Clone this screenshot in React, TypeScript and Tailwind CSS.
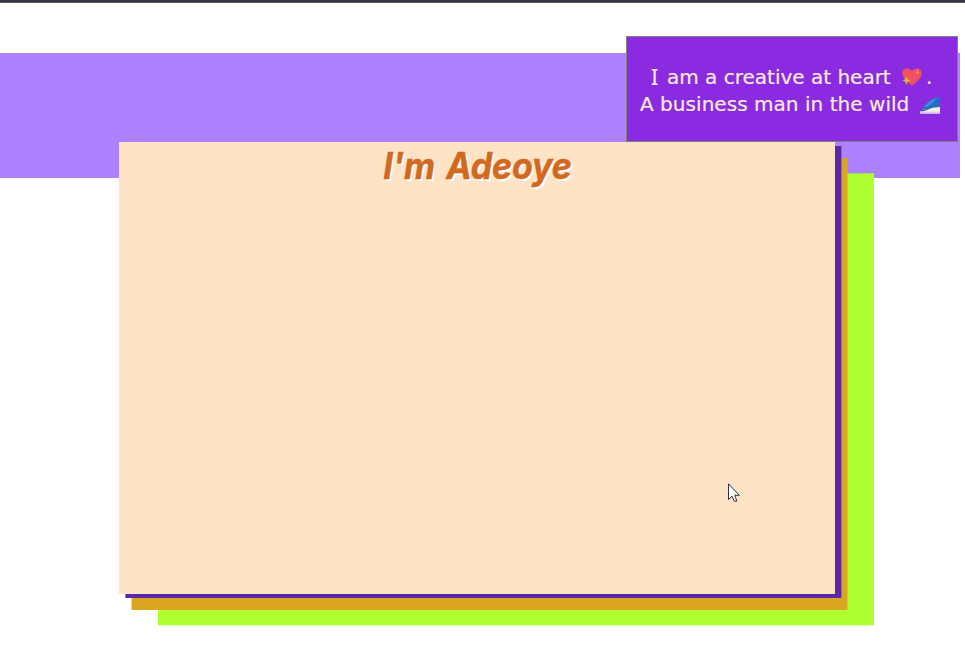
function SparklingHeart() {
  return (
    <svg viewBox="0 0 20 18" className="ml-[10px] h-[18px] w-[20px]" aria-hidden="true">
      <path d="M10 17.500C7 15 .2 10.500.2 5.200C.2 2.200 2.400.4 5 .4C7.400.4 9 1.500 10 3.200C11 1.500 12.600.4 15 .4C17.600.4 19.800 2.200 19.800 5.200C19.800 10.500 13 15 10 17.500Z" fill="#f25060" />
      <path d="M4.500 8L5.700 11.300L9 12.500L5.700 13.700L4.500 17L3.300 13.700L.5 12.500L3.300 11.300Z" fill="#d9b936" />
      <path d="M15.500 2L16.200 3.600L17.800 4.300L16.200 5L15.500 6.600L14.800 5L13.200 4.300L14.800 3.600Z" fill="#d0a83b" />
    </svg>
  );
}

function WaterWave() {
  return (
    <svg viewBox="0 0 20 18" className="ml-[10px] mt-[2px] h-[18px] w-[20px]" aria-hidden="true">
      <path d="M.8 14C5 8.500 11 2 20 1V15H.8Z" fill="#246dc5" />
      <path d="M4 11C9 5 13 2.500 18 1.800C14 4 13 8.500 7 11Z" fill="#3b8adb" />
      <path d="M0 15.500C7 15.500 9 11.600 15 11.400L20 11V17.500H0Z" fill="#f8f0df" />
      <path d="M0 15.500H20V17.500H0Z" fill="#dbcce9" />
      <path d="M3 13.300H6.200" stroke="#df5475" strokeWidth="1" />
    </svg>
  );
}

function Quote() {
  return (
    <aside className="absolute right-[7px] top-[36px] flex h-[106px] w-[332px] flex-col justify-center border border-[#808080] bg-[#8a2be2] pt-[3px] font-['DejaVu_Sans',Verdana,sans-serif] text-[20px] leading-[27px] text-[#faebd7] [-webkit-text-stroke:0.2px_#faebd7]">
      <p className="flex h-[27px] items-center pl-[24px]">
        <span className="w-[16px] font-['Noto_Sans',sans-serif] text-[21px]">I</span>
        <span className="w-[225px] whitespace-nowrap">am a creative at heart</span>
        <SparklingHeart />
        <span className="ml-[4px]">.</span>
      </p>
      <p className="flex h-[27px] items-center pl-[13px]">
        <span className="w-[270px] whitespace-nowrap tracking-[0.04px]">A business man in the wild</span>
        <WaterWave />
      </p>
    </aside>
  );
}

function Pointer() {
  return (
    <svg viewBox="0 0 13 20" className="absolute left-[728px] top-[483px] z-20 h-[20px] w-[13px]" aria-hidden="true">
      <path d="M.5 .8V16.500L4 13.200L6.300 18.200H8.800L6.800 12.300H11.300Z" fill="white" stroke="#352b3e" strokeWidth="1" />
    </svg>
  );
}

export default function App() {
  return (
    <main className="relative flex h-[648px] w-[965px] flex-col overflow-hidden bg-white">
      <div className="h-[3px] shrink-0 border-b border-[#57515d] bg-[#3a3345]" />
      <header className="mt-[50px] h-[125px] w-[960px] shrink-0 bg-[#ae82ff]" />
      <section className="z-10 ml-[119px] mt-[-36px] flex h-[452px] w-[716px] items-start justify-center bg-[#fee3c6] pt-px shadow-[6.400px_4px_0_#5b29a8,12.500px_16px_0_#daa520,39px_31.300px_0_#adff2f]">
        <h1 className="scale-x-[0.92] font-[Inter,sans-serif] text-[37px] font-bold italic leading-[46px] tracking-[-0.2px] text-[#d2691e] [-webkit-text-stroke:0.5px_#d2691e] [word-spacing:4px] [text-shadow:2px_2px_0_white]">I'm Adeoye</h1>
      </section>
      <Quote />
      <Pointer />
    </main>
  );
}
